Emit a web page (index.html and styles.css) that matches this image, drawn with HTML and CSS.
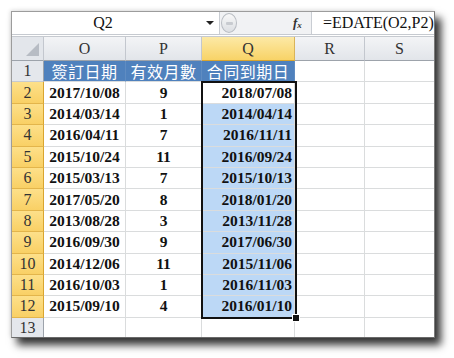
FILE: index.html
```html
<!DOCTYPE html>
<html>
<head>
<meta charset="utf-8">
<link rel="stylesheet" href="styles.css">
</head>
<body>
<div class="window">
  <div class="fbar">
    <div class="namebox"><span class="name">Q2</span><span class="arrow"></span></div>
    <div class="btns">
      <span class="circle"><span class="dash"></span></span>
      <span class="fx">f<sub>x</sub></span>
    </div>
    <div class="formula">=EDATE(O2,P2)</div>
  </div>
  <div class="sheet">
    <div class="ch corner"><span class="tri"></span></div>
    <div class="ch">O</div>
    <div class="ch">P</div>
    <div class="ch sel">Q</div>
    <div class="ch">R</div>
    <div class="ch last">S</div>

    <div class="rh">1</div>
    <div class="c hd">簽訂日期</div>
    <div class="c hd">有效月數</div>
    <div class="c hd">合同到期日</div>
    <div class="c"></div>
    <div class="c last"></div>

    <div class="rh sel">2</div><div class="c d">2017/10/08</div><div class="c d">9</div><div class="c q act">2018/07/08</div><div class="c"></div><div class="c last"></div>
    <div class="rh sel">3</div><div class="c d">2014/03/14</div><div class="c d">1</div><div class="c q">2014/04/14</div><div class="c"></div><div class="c last"></div>
    <div class="rh sel">4</div><div class="c d">2016/04/11</div><div class="c d">7</div><div class="c q">2016/11/11</div><div class="c"></div><div class="c last"></div>
    <div class="rh sel">5</div><div class="c d">2015/10/24</div><div class="c d">11</div><div class="c q">2016/09/24</div><div class="c"></div><div class="c last"></div>
    <div class="rh sel">6</div><div class="c d">2015/03/13</div><div class="c d">7</div><div class="c q">2015/10/13</div><div class="c"></div><div class="c last"></div>
    <div class="rh sel">7</div><div class="c d">2017/05/20</div><div class="c d">8</div><div class="c q">2018/01/20</div><div class="c"></div><div class="c last"></div>
    <div class="rh sel">8</div><div class="c d">2013/08/28</div><div class="c d">3</div><div class="c q">2013/11/28</div><div class="c"></div><div class="c last"></div>
    <div class="rh sel">9</div><div class="c d">2016/09/30</div><div class="c d">9</div><div class="c q">2017/06/30</div><div class="c"></div><div class="c last"></div>
    <div class="rh sel">10</div><div class="c d">2014/12/06</div><div class="c d">11</div><div class="c q">2015/11/06</div><div class="c"></div><div class="c last"></div>
    <div class="rh sel">11</div><div class="c d">2016/10/03</div><div class="c d">1</div><div class="c q">2016/11/03</div><div class="c"></div><div class="c last"></div>
    <div class="rh sel">12</div><div class="c d">2015/09/10</div><div class="c d">4</div><div class="c q">2016/01/10</div><div class="c"></div><div class="c last"></div>
    <div class="rh">13</div><div class="c"></div><div class="c"></div><div class="c"></div><div class="c"></div><div class="c last"></div>

    <div class="selbox"><span class="handle"></span></div>
  </div>
</div>
</body>
</html>
```

FILE: styles.css
```css
html, body {
  margin: 0;
  padding: 0;
  background: #ffffff;
}
body {
  width: 454px;
  height: 358px;
  overflow: hidden;
}
.window {
  margin: 11px 0 0 11px;
  width: 424px;
  height: 327px;
  border: 1px solid #9c9c9c;
  border-right-color: #7a7a7a;
  border-bottom-color: #6a6a6a;
  box-sizing: border-box;
  background: #fff;
  box-shadow: 6px 7px 8px rgba(0,0,0,0.8), -1px -1px 4px rgba(0,0,0,0.12);
  overflow: hidden;
  display: flex;
  flex-direction: column;
}
.fbar {
  height: 23px;
  display: flex;
  background: #f1f2f4;
  border-bottom: 1px solid #c6cad0;
  box-sizing: border-box;
  flex: none;
}
.namebox {
  width: 207px;
  background: #fff;
  border-right: 1px solid #c9cdd3;
  display: flex;
  align-items: center;
}
.name {
  flex: 1;
  text-align: center;
  font-family: "Liberation Serif", serif;
  font-size: 16px;
  color: #111;
  margin-left: -12px;
}
.arrow {
  width: 0;
  height: 0;
  border-left: 4px solid transparent;
  border-right: 4px solid transparent;
  border-top: 4px solid #222;
  margin-right: 5px;
}
.btns {
  width: 91px;
  display: flex;
  align-items: center;
}
.circle {
  width: 16px;
  height: 20px;
  border-radius: 50%;
  border: 1px solid #b9bdc3;
  background: linear-gradient(#f8f8f8, #dcdfe3);
  margin-left: 1px;
  display: flex;
  align-items: center;
  justify-content: center;
  box-sizing: border-box;
}
.dash {
  width: 7px;
  height: 3px;
  background: #c8cbd0;
  border-radius: 1px;
}
.fx {
  margin-left: 56px;
  font-family: "Liberation Serif", serif;
  font-style: italic;
  font-weight: bold;
  font-size: 13px;
  color: #333;
}
.fx sub {
  font-size: 9px;
  vertical-align: -1px;
}
.formula {
  flex: 1;
  background: #fff;
  border-left: 1px solid #c9cdd3;
  font-family: "Liberation Serif", serif;
  font-size: 16px;
  color: #111;
  padding-left: 11px;
  line-height: 22px;
  white-space: nowrap;
}
.sheet {
  margin-top: 1px;
  display: grid;
  grid-template-columns: 32px 82px 76px 93px 70px 1fr;
  grid-template-rows: 24px repeat(13, 21.4px);
  position: relative;
  border-top: 1px solid #c6cad0;
}
.ch {
  background: linear-gradient(#f3f4f6, #e2e5ea);
  border-right: 1px solid #c3c7ce;
  border-bottom: 1px solid #9da3ab;
  font-family: "Liberation Serif", serif;
  font-size: 16px;
  color: #333;
  display: flex;
  align-items: center;
  justify-content: center;
  box-sizing: border-box;
}
.ch.sel {
  background: linear-gradient(#fce9a6, #f8d367);
  border-bottom-color: #d9a52f;
  border-right-color: #d9b45a;
}
.ch.last { border-right: none; }
.corner {
  position: relative;
  background: #e3e6eb;
}
.tri {
  position: absolute;
  right: 4px;
  bottom: 4px;
  width: 0;
  height: 0;
  border-left: 13px solid transparent;
  border-bottom: 13px solid #b7bcc4;
}
.rh {
  background: #e4e7ec;
  border-right: 1px solid #9da3ab;
  border-bottom: 1px solid #c6cad0;
  font-family: "Liberation Serif", serif;
  font-size: 16px;
  color: #333;
  display: flex;
  align-items: center;
  justify-content: center;
  box-sizing: border-box;
}
.rh.sel {
  background: linear-gradient(#fde08a, #f9d065);
  border-bottom-color: #e3b54b;
  border-right-color: #d9a52f;
}
.c {
  border-right: 1px solid #dadcdd;
  border-bottom: 1px solid #dadcdd;
  box-sizing: border-box;
  display: flex;
  align-items: center;
  font-family: "Liberation Serif", serif;
  font-weight: bold;
  font-size: 15.5px;
  line-height: 18px;
  color: #111;
  white-space: nowrap;
}
.c.last { border-right: none; }
.c.d { justify-content: center; }
.c.q {
  justify-content: flex-end;
  padding-right: 2px;
  background: #bcd8f6;
}
.c.q.act { background: #fff; }
.c.hd {
  background: #4f81bd;
  color: #fff;
  font-family: "Noto Sans CJK TC", "Noto Sans CJK SC", sans-serif;
  font-weight: normal;
  font-size: 16px;
  line-height: 16px;
  justify-content: center;
  letter-spacing: 0.5px;
  border-right-color: #5f8cc2;
  border-bottom-color: #dadcdd;
}
.selbox {
  position: absolute;
  left: 189px;
  top: 44px;
  width: 96px;
  height: 238px;
  border: 2px solid #111;
  box-sizing: border-box;
  pointer-events: none;
}
.handle {
  position: absolute;
  right: -5px;
  bottom: -5px;
  width: 6px;
  height: 6px;
  background: #111;
  border: 1px solid #fff;
}
```
